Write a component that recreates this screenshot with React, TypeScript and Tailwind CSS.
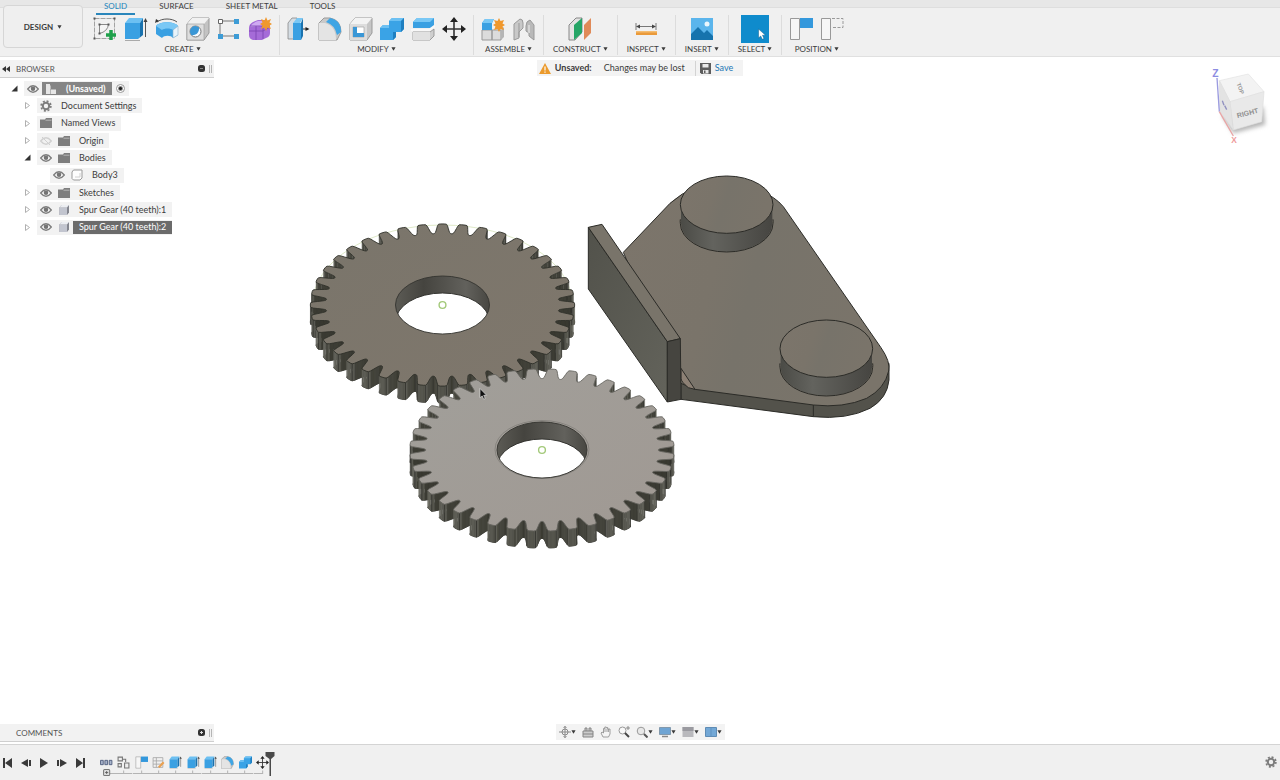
import React, { useState } from 'react';
import clsx from 'clsx';

const Caret = () => (
  <svg viewBox="0 0 6 4" className="h-1 w-[5px] shrink-0" aria-hidden="true">
    <path d="M.5 0h5L3 4z" fill="#3c3c3c" />
  </svg>
);

/* ---------- ribbon icons, all on a 24x24 grid ---------- */

const SketchIcon = () => (
  <>
    <path d="M1.500 1.500h20v20h-20z" fill="none" stroke="#a3a3a3" strokeDasharray="5 1" />
    <path d="M6.500 16.500v-9h9q-1 7-9 9z" fill="#f4f4f4" stroke="#888" />
    <path d="M.5.5h2v2h-2zM20.500.5h2v2h-2zM.5 20.500h2v2h-2zM5.500 6.500h2v2h-2zM14.500 6.500h2v2h-2zM5.500 15.500h2v2h-2z" fill="#555" />
    <path d="M18 13v10M13 18h10" stroke="#1fa04b" strokeWidth="3.500" />
  </>
);
const ExtrudeIcon = () => (
  <>
    <path d="M1 6l4-5h14l-3 5z" fill="#6cc0f2" />
    <path d="M1 6h15v14l-2 2H1z" fill="#3aa0e2" />
    <path d="M16 6l3-5v17l-5 4 2-2z" fill="#1a72ae" />
    <path d="M1 23.500h15" stroke="#aaa" />
    <path d="M21.500 20V4" stroke="#555" />
    <path d="M19.500 5l2-4 2 4z" fill="#444" />
  </>
);
const RevolveIcon = () => (
  <>
    <path d="M1 9c4-5 18-5 22 0v9l-5 3c-2-3-9-3-11 0l-6-4z" fill="#3aa0e2" />
    <path d="M1 9c4-5 18-5 22 0l-5 4c-2-2-9-2-11 0z" fill="#7ac8f5" />
    <path d="M18 13l5-4v9l-5 3z" fill="#e8f3fa" stroke="#8bb3cc" strokeWidth=".6" />
    <path d="M2 5C7 1 17 1 22 5" fill="none" stroke="#555" />
    <path d="M0 6l1-4 3 2z" fill="#333" />
  </>
);
const HoleIcon = () => (
  <>
    <path d="M1 7l5-6h17v15l-5 7H1z" fill="#c3c3c3" stroke="#999" />
    <path d="M1 7l5-6h17l-5 6z" fill="#f1f1f1" />
    <path d="M1 7h17v16H1z" fill="#dedede" stroke="#999" strokeWidth=".6" />
    <circle cx="9.500" cy="14.500" r="5.500" fill="#f7fbff" stroke="#777" />
    <path d="M9.500 9a5.500 5.500 0 0 0-4 9.200c5 .5 8-3 7.500-7.900z" fill="#3a97d6" />
  </>
);
const PatternIcon = () => (
  <>
    <path d="M3 4v15h16M5 4h14" fill="none" stroke="#777" strokeWidth="1" />
    <path d="M1.500 2.500h4v4h-4z" fill="#fff" stroke="#666" />
    <path d="M17 2h5v5h-5zM1 17h5v5H1zM17 17h5v5h-5z" fill="#3d9cd6" />
  </>
);
const FormIcon = () => (
  <>
    <path d="M1 11q0-4 4-6l5-2h8q4 2 4 6v7q0 4-4 5l-4 2H5q-4-1-4-5z" fill="#a56bd8" />
    <path d="M2 10q2-4 8-6h7l-3 5z" fill="#cfaaf2" />
    <path d="M1 14h14l7-4M8 9v14M15 9v13M2 9h13l6-4" fill="none" stroke="#7a43b0" strokeWidth=".8" />
    <path d="M18 0l1.500 3.500L23 2l-1.500 3.500L24 7l-2.500 1.500L23 12l-3.500-1.500L18 14l-1.500-3.500L13 12l1.500-3.500L12 7l2.500-1.500L13 2l3.500 1.500z" fill="#f0982d" />
  </>
);
const PressPullIcon = () => (
  <>
    <path d="M1 6l4-5h5v21H1z" fill="#d5dde3" stroke="#888" strokeWidth=".8" />
    <path d="M6 6l4-5h6l-3 5z" fill="#7ac8f5" />
    <path d="M6 6h8v17H6z" fill="#3aa0e2" />
    <path d="M14 6l2-5v18l-2 4z" fill="#1a72ae" />
    <path d="M16 12h5" stroke="#333" />
    <path d="M18.500 10l4 2-4 2z" fill="#222" />
  </>
);
const FilletIcon = () => (
  <>
    <path d="M1 6l5-5h6q11 2 11 14l-4 8H1z" fill="#c9c9c9" stroke="#999" />
    <path d="M1 6h6q11 3 11 17H1z" fill="#e4e4e4" />
    <path d="M8 5l4-4q11 2 11 14l-4 3Q17 8 8 5z" fill="#3fa5e4" />
  </>
);
const ShellIcon = () => (
  <>
    <path d="M1 7l5-6h17v15l-5 7H1z" fill="#c6c6c6" stroke="#999" />
    <path d="M1 7l5-6h17l-5 6z" fill="#f3f3f3" />
    <path d="M1 7h17v16H1z" fill="#ddd" />
    <path d="M4 10h11v10H4z" fill="#fff" stroke="#999" strokeWidth=".6" />
    <path d="M4 10h4v6h7v4H4z" fill="#3a97d6" />
  </>
);
const CombineIcon = () => (
  <>
    <path d="M0 11l3-3h6V4l3-3h12v11l-3 3h-5v5l-3 3H0z" fill="#3aa3e6" />
    <path d="M0 11l3-3h6V4l3-3h12l-3 3H9v7z" fill="#6cc0f2" />
    <path d="M21 4l3-3v11l-3 3zM13 15h3v5l-3 3z" fill="#1f7fc0" />
  </>
);
const SplitIcon = () => (
  <>
    <path d="M2 5l4-4h17v7l-4 3H2z" fill="#3aa0e2" />
    <path d="M2 5l4-4h17l-4 4z" fill="#7ac8f5" />
    <path d="M0 13h18l6-4" fill="none" stroke="#f8f8f8" strokeWidth="2" />
    <path d="M2 15h17l4-3v7l-4 4H2z" fill="#cfcfcf" stroke="#8a8a8a" strokeWidth=".8" />
    <path d="M2 15h17v8H2z" fill="#e1e1e1" />
  </>
);
const MoveIcon = () => (
  <>
    <path d="M12 4v16M4 12h16" stroke="#333" strokeWidth="1.600" />
    <path d="M12 0l4 5H8zM12 24l4-5H8zM0 12l5-4v8zM24 12l-5-4v8z" fill="#222" />
  </>
);
const ComponentIcon = () => (
  <>
    <path d="M1 13h10v10H1zM11 13h9v10h-9z" fill="#dcdcdc" stroke="#999" />
    <path d="M20 13l3-3v10l-3 3z" fill="#b5b5b5" />
    <path d="M1 6l3-4h9l-2 4v7H1z" fill="#3aa0e2" />
    <path d="M1 6l3-4h9l-2 4z" fill="#7ac8f5" />
    <path d="M18 1l1.500 3L23 3l-1.500 3.500L24 8l-2.500 1.500L23 13l-3.500-1-1.500 3-1.500-3-3.500 1 1.500-3.500L12 8l2.500-1.500L13 3l3.500 1z" fill="#f0982d" />
  </>
);
const JointIcon = () => (
  <>
    <path d="M2 7l6-5q3 0 3 4v5l-4 4v6l-5 2z" fill="#c8c8c8" stroke="#999" />
    <path d="M7 6v14" stroke="#999" />
    <path d="M22 8l-4-5q-4 1-4 6v5l3 2v3l5 4z" fill="#b9b9b9" stroke="#999" />
    <path d="M17 8v8" stroke="#f0f0f0" />
  </>
);
const PlaneIcon = () => (
  <>
    <path d="M1 8l7-7h6v14l-7 8H1z" fill="#e3e3e3" stroke="#888" />
    <path d="M6 8l8-7v15l-8 7z" fill="#25a566" />
    <path d="M16 8l7-7v15l-7 7z" fill="#e08a58" />
  </>
);
const MeasureIcon = () => (
  <>
    <path d="M2 6v7M22 6v7M3 9.500h18" stroke="#777" />
    <path d="M2 9.500l4-2v4zM22 9.500l-4-2v4z" fill="#444" />
    <path d="M2 14h21v4H2z" fill="#ea9a3a" />
    <path d="M2 14h21v1.500H2z" fill="#f5bc70" />
  </>
);
const ImageIcon = () => (
  <>
    <path d="M1 1h22v22H1z" fill="#5bb5ec" />
    <circle cx="17" cy="7" r="2.500" fill="#eaf6fd" />
    <path d="M1 17l7-7 6 6 3-3 6 6v4H1z" fill="#1673ad" />
  </>
);
const CapturePositionIcon = () => (
  <>
    <path d="M1.500 1.500h9v21h-9z" fill="#f6f6f6" stroke="#999" />
    <path d="M11 1h13v10H11z" fill="#3498dc" />
  </>
);
const RevertPositionIcon = () => (
  <>
    <path d="M1.500 1.500h9v21h-9z" fill="#f6f6f6" stroke="#999" />
    <path d="M12 1.500h11v9H12" fill="none" stroke="#999" strokeDasharray="3 1.500" />
  </>
);

type Tool = { name: string; Icon: React.FC };
type Group = { label: string; tools: Tool[]; compact?: boolean };

const groups: Group[] = [
  {
    label: 'CREATE',
    tools: [
      { name: 'Create Sketch', Icon: SketchIcon },
      { name: 'Extrude', Icon: ExtrudeIcon },
      { name: 'Revolve', Icon: RevolveIcon },
      { name: 'Hole', Icon: HoleIcon },
      { name: 'Pattern', Icon: PatternIcon },
      { name: 'Create Form', Icon: FormIcon },
    ],
  },
  {
    label: 'MODIFY',
    tools: [
      { name: 'Press Pull', Icon: PressPullIcon },
      { name: 'Fillet', Icon: FilletIcon },
      { name: 'Shell', Icon: ShellIcon },
      { name: 'Combine', Icon: CombineIcon },
      { name: 'Split Body', Icon: SplitIcon },
      { name: 'Move', Icon: MoveIcon },
    ],
  },
  {
    label: 'ASSEMBLE',
    tools: [
      { name: 'New Component', Icon: ComponentIcon },
      { name: 'Joint', Icon: JointIcon },
    ],
  },
  { label: 'CONSTRUCT', compact: true, tools: [{ name: 'Offset Plane', Icon: PlaneIcon }] },
  { label: 'INSPECT', compact: true, tools: [{ name: 'Measure', Icon: MeasureIcon }] },
  { label: 'INSERT', compact: true, tools: [{ name: 'Canvas', Icon: ImageIcon }] },
  { label: 'SELECT', compact: true, tools: [] },
  {
    label: 'POSITION',
    tools: [
      { name: 'Capture Position', Icon: CapturePositionIcon },
      { name: 'Revert Position', Icon: RevertPositionIcon },
    ],
  },
];

const tabs = ['SOLID', 'SURFACE', 'SHEET METAL', 'TOOLS'];

const Header = () => {
  const [activeTab, setActiveTab] = useState('SOLID');

  return (
    <header className="flex h-[57px] shrink-0 border-b border-[#e0e0e0] bg-[linear-gradient(#e7e7e7_0_7px,#dedede_7px_8px,#f0f0f0_8px)] text-[8px]">
      <button className="mt-[5px] ml-[3px] flex h-[43px] w-20 items-center justify-center gap-1 rounded-sm border border-[#d6d6d6] bg-[#efefef] font-bold">
        DESIGN <Caret />
      </button>
      <div className="ml-[3px] flex flex-col">
        <nav className="flex h-[15px] gap-4 pl-2.5">
          {tabs.map((tab) => (
            <button
              key={tab}
              onClick={() => setActiveTab(tab)}
              className={clsx(
                'h-[15px] border-b-2 px-2 leading-[13px]',
                activeTab === tab ? 'border-[#2a86bb] text-[#2484bb]' : 'border-transparent'
              )}
            >
              {tab}
            </button>
          ))}
        </nav>
        <div className="flex">
          {groups.map((group) => (
            <section
              key={group.label}
              className={clsx(
                'flex flex-col items-center border-r border-[#dcdcdc] last:border-r-0',
                group.compact ? 'px-[9px]' : 'px-[7px]'
              )}
            >
              <div className="flex h-7 items-center gap-[7px]">
                {group.tools.map(({ name, Icon }) => (
                  <button key={name} aria-label={name}>
                    <svg viewBox="0 0 24 24" className="size-6">
                      <Icon />
                    </svg>
                  </button>
                ))}
                {group.label === 'SELECT' && (
                  <button aria-label="Select" className="bg-[#0f8bcc]">
                    <svg viewBox="0 0 28 28" className="size-7">
                      <path d="M17.500 14v9l2.200-2 1.500 3.300 1.800-.8-1.500-3.300h3z" fill="#fff" stroke="#0a5f8e" strokeWidth=".5" />
                    </svg>
                  </button>
                )}
              </div>
              <button className="flex h-3 items-center gap-0.5 leading-3">
                {group.label} <Caret />
              </button>
            </section>
          ))}
        </div>
      </div>
    </header>
  );
};

/* ---------- browser tree ---------- */

const Eye = ({ off = false }) => (
  <svg viewBox="0 0 12 10" className="h-2.5 w-3">
    <path d="M.7 5Q6-1.500 11.300 5 6 11.500.7 5z" fill={off ? '#f1f1f1' : '#fff'} stroke={off ? '#d0d0d0' : '#7c7c7c'} strokeWidth="1.300" />
    {off ? <path d="M2 1l8 8" stroke="#d0d0d0" /> : <circle cx="6" cy="4.800" r="2.300" fill="#747474" />}
  </svg>
);
const Cog = () => (
  <svg viewBox="0 0 12 12" className="size-3">
    <circle cx="6" cy="6" r="3.200" fill="none" stroke="#7c7c7c" strokeWidth="2" />
    <circle cx="6" cy="6" r="4.900" fill="none" stroke="#7c7c7c" strokeWidth="1.600" strokeDasharray="2 1.848" />
  </svg>
);
const Folder = () => (
  <svg viewBox="0 0 12 10" className="h-2.5 w-3">
    <path d="M0 1.500h5L6 0h6v10H0z" fill="#7e7e7e" />
    <path d="M5.500 2.200h6" stroke="#c4c4c4" strokeWidth=".8" />
  </svg>
);
const Body = () => (
  <svg viewBox="0 0 12 12" className="size-3">
    <path d="M1 3l1.500-2H11v8l-2 2H2.500L1 9.500z" fill="#fdfdfd" stroke="#999" />
    <path d="M4 8h5V4" fill="none" stroke="#d0d0d0" />
  </svg>
);
const Part = () => (
  <svg viewBox="0 0 12 12" className="size-3">
    <path d="M1.500 3.500l2-2.500h7.500v7.500L9 11H1.500z" fill="#84868f" />
    <path d="M1.500 3.500H9V11H1.500z" fill="#c2c5cf" />
    <path d="M1.500 3.500l2-2.500H11L9 3.500z" fill="#eceef2" />
  </svg>
);
const Assembly = () => (
  <svg viewBox="0 0 12 12" className="size-3">
    <path d="M1 1h4v10H1zM5.500 6.500H11V11H5.500z" fill="#e6e6e6" />
    <path d="M5 3l1-1v4.500H5z" fill="#bbb" />
  </svg>
);

const icons = { cog: Cog, folder: Folder, body: Body, part: Part, assembly: Assembly };

interface TreeNode {
  label: string;
  depth: 0 | 1 | 2;
  icon: keyof typeof icons;
  arrow?: 'open' | 'closed';
  eye?: 'on' | 'off';
}

const tree: TreeNode[] = [
  { label: '(Unsaved)', depth: 0, icon: 'assembly', arrow: 'open', eye: 'on' },
  { label: 'Document Settings', depth: 1, icon: 'cog', arrow: 'closed' },
  { label: 'Named Views', depth: 1, icon: 'folder', arrow: 'closed' },
  { label: 'Origin', depth: 1, icon: 'folder', arrow: 'closed', eye: 'off' },
  { label: 'Bodies', depth: 1, icon: 'folder', arrow: 'open', eye: 'on' },
  { label: 'Body3', depth: 2, icon: 'body', eye: 'on' },
  { label: 'Sketches', depth: 1, icon: 'folder', arrow: 'closed', eye: 'on' },
  { label: 'Spur Gear (40 teeth):1', depth: 1, icon: 'part', arrow: 'closed', eye: 'on' },
  { label: 'Spur Gear (40 teeth):2', depth: 1, icon: 'part', arrow: 'closed', eye: 'on' },
];

const indent = ['pl-2', 'pl-[21px]', 'pl-[34px]'];

const PanelTitle = ({ title, plus = false }: { title: string; plus?: boolean }) => (
  <div className="flex h-[18px] items-center border-b border-[#cfcfcf] bg-[#f2f2f2] text-[8px] text-[#555]">
    <svg viewBox="0 0 8 6" className={clsx('ml-0.5 h-1.5 w-2', plus && 'invisible')}>
      <path d="M4 0v6L0 3zM8 0v6L4 3z" fill="#333" />
    </svg>
    <h2 className="ml-1.5 flex-1">{title}</h2>
    <button aria-label={plus ? 'Add comment' : 'Collapse'}>
      <svg viewBox="0 0 7 7" className="size-[7px]">
        <rect width="7" height="7" rx="2.500" fill="#333" />
        <path d={plus ? 'M2 3.500h3M3.500 2v3' : 'M2 3.500h3'} stroke={plus ? '#ddd' : '#888'} />
      </svg>
    </button>
    <span className="mr-0.5 ml-1 h-2 w-[3px] border-x border-[#b5b5b5]" />
  </div>
);

const Browser = () => {
  const [selected, setSelected] = useState('Spur Gear (40 teeth):2');

  return (
    <aside className="w-[214px]">
      <PanelTitle title="BROWSER" />
      <ul className="mt-0.5 grid h-[156px] auto-rows-fr">
        {tree.map((node) => {
          const Icon = icons[node.icon];
          const root = node.depth === 0;
          return (
            <li key={node.label} className={clsx('flex items-center', indent[node.depth])}>
              <span className="flex w-4 justify-center pr-1">
                {node.arrow && (
                  <svg viewBox="0 0 7 7" className="size-[7px]">
                    {node.arrow === 'open' ? (
                      <path d="M6.500.5v6h-6z" fill="#333" />
                    ) : (
                      <path d="M1.500.500l4 3-4 3z" fill="#fff" stroke="#b0b0b0" />
                    )}
                  </svg>
                )}
              </span>
              <div className="flex h-[15px] items-center bg-[#f2f2f2]">
                {node.eye && (
                  <button aria-label={`Toggle ${node.label}`} className="flex w-[18px] justify-center">
                    <Eye off={node.eye === 'off'} />
                  </button>
                )}
                <button
                  onClick={() => setSelected(node.label)}
                  className={clsx('flex h-[13px] items-center', root && 'bg-[#858585] font-bold text-white')}
                >
                  <span className="flex w-[18px] justify-center">
                    <Icon />
                  </span>
                  <span
                    className={clsx(
                      'flex h-[13px] items-center px-1.5 whitespace-nowrap',
                      selected === node.label && 'bg-[#6b6b6b] text-white'
                    )}
                  >
                    {node.label}
                  </span>
                </button>
                {root && (
                  <input
                    type="radio"
                    aria-label="Activate component"
                    defaultChecked
                    className="mx-1 size-[9px] appearance-none rounded-full border border-[#999] bg-[radial-gradient(#222_1px,#fff_3px)]"
                  />
                )}
              </div>
            </li>
          );
        })}
      </ul>
    </aside>
  );
};

/* ---------- model ---------- */

// half a tooth: [degrees from tooth centre, radius as a share of the outer radius]
const profile = [
  [4.3, 0.882], [3.9, 0.885], [3.5, 0.895], [3.1, 0.915], [2.6, 0.95], [2.2, 0.98], [1.7, 0.998], [0.8, 1.001],
];

const TEETH = 40;
const RX = 132;
const RY = 81;
const DEPTH = 17;

const gearPoints = (cx: number, cy: number, phase: number) => {
  const pts: [number, number][] = [];
  for (let i = 0; i < TEETH; i++) {
    const centre = (i * 360) / TEETH + phase - 90;
    const left = profile.map(([a, r]) => [centre - a, r]);
    const right = [...profile].reverse().map(([a, r]) => [centre + a, r]);
    [...left, ...right].forEach(([a, r]) => {
      const rad = (a * Math.PI) / 180;
      pts.push([cx + Math.cos(rad) * r * RX, cy + Math.sin(rad) * r * RY]);
    });
  }
  return pts;
};

interface GearProps {
  id: string;
  cx: number;
  cy: number;
  phase: number;
  face: [string, string];
  edge: string;
  inset?: boolean;
}

const Gear: React.FC<GearProps> = ({ id, cx, cy, phase, face, edge, inset }) => {
  const pts = gearPoints(cx, cy, phase);
  const outline = pts.map(([x, y]) => `${x.toFixed(2)} ${y.toFixed(2)}`).join('L');
  const hx = inset ? 45 : 47;
  const hy = inset ? 28 : 29;
  const hole = `M${cx - hx} ${cy}a${hx} ${hy} 0 1 0 ${hx * 2} 0a${hx} ${hy} 0 1 0 ${-hx * 2} 0z`;

  // only the walls that face the viewer, far ones first
  const walls = pts
    .map((p, i) => {
      const q = pts[(i + 1) % pts.length];
      const dx = q[0] - p[0];
      const dy = q[1] - p[1];
      const len = Math.hypot(dx, dy) || 1;
      return { p, q, i, nx: dy / len, ny: -dx / len, y: (p[1] + q[1]) / 2 };
    })
    .filter((w) => w.ny > 0)
    .sort((a, b) => a.y - b.y);

  return (
    <g>
      <defs>
        <linearGradient id={`${id}-face`} x1="0" y1="0" x2="1" y2="1">
          <stop offset="0" stopColor={face[0]} />
          <stop offset="1" stopColor={face[1]} />
        </linearGradient>
        <linearGradient id={`${id}-bore`}>
          <stop offset="0" stopColor="#5c5b55" />
          <stop offset=".3" stopColor="#45443f" />
          <stop offset=".75" stopColor="#62615c" />
          <stop offset="1" stopColor="#484742" />
        </linearGradient>
        <clipPath id={`${id}-clip`}>
          <path d={hole} />
        </clipPath>
      </defs>
      <path d={`M${outline}z`} transform={`translate(0 ${DEPTH})`} fill="#3d3c37" stroke="#2b2b27" strokeWidth=".8" />
      {[...walls].map(({ p, q, nx, i }) => {
        // tooth tips catch the light, flanks stay dark
        const tip = i % 16 > 4 && i % 16 < 10;
        const shade = Math.round((tip ? 84 : 56) + 22 * Math.abs(nx));
        const fill = `rgb(${shade},${shade},${shade - 8})`;
        return (
          <path
            key={i}
            d={`M${p[0]} ${p[1]}L${q[0]} ${q[1]}v${DEPTH}L${p[0]} ${p[1] + DEPTH}z`}
            fill={fill}
            stroke={fill}
            strokeWidth=".4"
          />
        );
      })}
      {walls
        .filter(({ i }) => i % 16 === 6 || i % 16 === 10)
        .map(({ p, i }) => (
          <path key={i} d={`M${p[0]} ${p[1]}v${DEPTH}`} stroke="#2c2c28" strokeWidth=".7" />
        ))}
      <path d={`M${outline}z`} fill={`url(#${id}-face)`} stroke={edge} strokeWidth=".9" strokeLinejoin="round" />
      {inset && (
        <ellipse cx={cx} cy={cy - 0.5} rx="47" ry="29" fill="none" stroke="#807d78" strokeWidth=".8" />
      )}
      <path d={hole} fill={`url(#${id}-bore)`} />
      <g clipPath={`url(#${id}-clip)`}>
        <path d={hole} transform={`translate(0 ${DEPTH})`} fill="#fff" stroke="#33332f" />
      </g>
      <path d={hole} fill="none" stroke="#33332f" strokeWidth=".9" />
      <circle cx={cx} cy={cy} r="3.400" fill="#fff" stroke="#a3c97a" strokeWidth="1.400" />
    </g>
  );
};

const Boss = ({ cx, cy }: { cx: number; cy: number }) => (
  <g stroke="#2b2b27" strokeWidth="3">
    <path d={`M${cx - 137} ${cy}v56a137 85 0 0 0 274 0v-56z`} fill="url(#boss)" stroke="none" />
    <path d={`M${cx - 139} ${cy + 44}q-1 6 0 12a139 86 0 0 0 278 0q1-6 0-12`} fill="none" />
    <ellipse cx={cx} cy={cy} rx="139" ry="86" fill="url(#plate)" />
  </g>
);

// drawn at three times the size of the scene, then scaled down
const Bracket = () => (
  <g transform="translate(580 165) scale(.33333)" stroke="#2b2b27" strokeWidth="3" strokeLinejoin="round">
    <defs>
      <linearGradient id="plate" x1="0" y1="0" x2="1" y2=".2">
        <stop offset="0" stopColor="#7c756b" />
        <stop offset=".4" stopColor="#7a746a" />
        <stop offset=".55" stopColor="#77736a" />
        <stop offset="1" stopColor="#7a746a" />
      </linearGradient>
      <linearGradient id="boss">
        <stop offset="0" stopColor="#4b4b46" />
        <stop offset=".35" stopColor="#63635e" />
        <stop offset="1" stopColor="#464541" />
      </linearGradient>
      <linearGradient id="flange" x1="0" y1="0" x2="1" y2="1">
        <stop offset="0" stopColor="#52524b" />
        <stop offset="1" stopColor="#63635b" />
      </linearGradient>
    </defs>
    <path d="M303 655L800 600 927 595V645Q922 700 870 730 800 765 700 755L303 703z" fill="#53524b" />
    <path d="M130 262L270 115Q340 50 440 60 560 65 610 125L903 548Q932 590 926 618 915 670 860 700 790 730 700 720L345 673 303 655z" fill="url(#plate)" />
    <path d="M700 720V755" />
    <path d="M303 610L345 673 325 668Q303 650 303 640z" fill="#8d8175" />
    <Boss cx={440} cy={119} />
    <Boss cx={739} cy={551} />
    <path d="M25 187L262 530V711L25 372z" fill="url(#flange)" />
    <path d="M25 187L66 178 301 521 262 530z" fill="#79746a" />
    <path d="M262 530L301 521 303 703 262 711z" fill="#464540" />
  </g>
);

const Scene = () => (
  <svg viewBox="0 57 1280 687" className="absolute inset-0 size-full" role="img" aria-label="Two spur gears and a bracket">
    <ellipse cx="442.500" cy="305" rx="130" ry="80" fill="none" stroke="#d5e3ba" strokeWidth=".8" />
    <Gear id="gear-1" cx={442.5} cy={305} phase={0} face={['#7a756b', '#7f776c']} edge="#2f3029" />
    <Gear id="gear-2" cx={542} cy={450} phase={4.5} face={['#a19f9a', '#a09993']} edge="#65645f" inset />
    <Bracket />
    <path d="M480 388.500v9.200l2.200-1.800 1.500 3.300 1.500-.7-1.500-3.200h2.900z" fill="#111" stroke="#eee" strokeWidth=".6" />
  </svg>
);

const ViewCube = () => (
  <svg viewBox="0 0 270 270" className="size-[90px]" role="img" aria-label="View cube">
    <defs>
      <filter id="soft" x="-30%" y="-30%" width="160%" height="160%">
        <feGaussianBlur stdDeviation="7" />
      </filter>
    </defs>
    <path d="M95 165L130 220 226 194 220 140z" fill="#b5b5b5" filter="url(#soft)" />
    <path d="M88 62L175 42 222 95 120 125z" fill="#f3f3f3" stroke="#e2e2e2" strokeWidth="2" />
    <path d="M120 125L222 95 215 185 130 210z" fill="#e9e9e9" stroke="#e0e0e0" strokeWidth="2" />
    <path d="M88 62L120 125 130 210 90 155z" fill="#e3e3e3" stroke="#dcdcdc" strokeWidth="2" />
    <path d="M81 54L88 155" stroke="#9b9be0" strokeWidth="4" />
    <path d="M88 155L130 228" stroke="#e8a5a5" strokeWidth="4" />
    <path d="M97 122l5 14M104 137l6 12" stroke="#9191c0" strokeWidth="4" />
    <g fontFamily="Liberation Sans" fontWeight="700" textAnchor="middle">
      <text x="76" y="50" fontSize="31" fill="#8c8ce2">Z</text>
      <text x="132" y="248" fontSize="25" fill="#ee9a9a">X</text>
      <text x="173" y="166" fontSize="21" fill="#909090" transform="rotate(-14 173 160)">RIGHT</text>
      <text x="152" y="92" fontSize="17" fill="#999" transform="rotate(70 152 85)">TOP</text>
    </g>
  </svg>
);

/* ---------- bottom bars ---------- */

const navTools = [
  { name: 'Orbit', caret: true, art: <path d="M6 0v12M0 6h12M3 6a3 3 0 1 0 6 0 3 3 0 1 0-6 0M4.500 2L6 .5 7.500 2M4.500 10L6 11.500 7.500 10" fill="none" stroke="#8a8a8a" /> },
  { name: 'Look At', art: <path d="M1 5h10v6H1zM3 5V2h2v3M7 5V2h2v3M1 8h10" fill="#ccc" stroke="#858585" /> },
  { name: 'Pan', art: <path d="M3 11L1 7l1-1 1.500 1V2.500h1.300V1h1.400v.500h1.500V3H10v5l-1.500 3zM5 2.500V6M7 2.500V6M8.600 3v3" fill="#f5f5f5" stroke="#888" strokeWidth=".8" /> },
  { name: 'Zoom', art: <><circle cx="4.500" cy="4.500" r="3.500" fill="#f8f8f8" stroke="#999" /><path d="M7 7l4 4" stroke="#444" strokeWidth="2" /><path d="M8 2h4M10 0v4" stroke="#777" strokeWidth=".8" /></> },
  { name: 'Fit', caret: true, art: <><circle cx="5" cy="5" r="3.800" fill="#e8e8e8" stroke="#999" /><path d="M8 8l3.500 3.500" stroke="#555" strokeWidth="2" /></> },
  { name: 'Display Settings', caret: true, art: <><path d="M.5 1.500h11v7H.5z" fill="#6fa4d3" stroke="#8299ad" /><path d="M3 10.500h6" stroke="#888" strokeWidth="1.500" /></> },
  { name: 'Grid and Snaps', caret: true, art: <><path d="M.5 1h11v10H.5z" fill="#b9b9bd" /><path d="M.5 1h11v4H.5z" fill="#9a9aa0" /></> },
  { name: 'Viewports', caret: true, art: <><path d="M.5 1.500h11v9H.5z" fill="#73a8d6" stroke="#5f8cb5" /><path d="M6 2v8" stroke="#5c8dbb" strokeWidth=".8" /></> },
];

const NavBar = () => (
  <div className="flex h-4 items-center gap-1.5 bg-[#f3f3f3] px-[3px]">
    {navTools.map(({ name, caret, art }) => (
      <button key={name} aria-label={name} className="flex items-center">
        <svg viewBox="0 0 12 12" className="size-3">{art}</svg>
        {caret && <Caret />}
      </button>
    ))}
  </div>
);

const playback = [
  { name: 'Go to start', d: 'M0 0h2v10H0zM9 0v10L2 5z' },
  { name: 'Step back', d: 'M7 1v8L0 5zM8 2h2v6H8z' },
  { name: 'Play', d: 'M1 0v10l8-5z' },
  { name: 'Step forward', d: 'M3 1v8l7-4zM0 2h2v6H0z' },
  { name: 'Go to end', d: 'M1 0v10l7-5zM8 0h2v10H8z' },
];

const features: Tool[] = [
  { name: 'Group', Icon: () => <path d="M1 8h5v8H1zM9 8h5v8H9zM17 8h5v8h-5z" fill="#a8b4cc" stroke="#4a5878" strokeWidth="1.600" /> },
  { name: 'Component', Icon: () => <path d="M2 2h8v7H2zM14 13h8v9h-8zM2 14h6v6H2zM10 6h6v5" fill="#eee" stroke="#777" strokeWidth="2" /> },
  { name: 'Position', Icon: CapturePositionIcon },
  { name: 'Sketch', Icon: () => <><path d="M2 3h18v18H2zM2 9h18M2 15h18M8 3v18" fill="none" stroke="#a5a5a5" strokeWidth="1.500" /><path d="M11 20l9-10 3 3-9 9z" fill="#eaa050" /></> },
  { name: 'Extrude 1', Icon: ExtrudeIcon },
  { name: 'Extrude 2', Icon: ExtrudeIcon },
  { name: 'Extrude 3', Icon: ExtrudeIcon },
  { name: 'Fillet', Icon: FilletIcon },
  { name: 'Combine', Icon: CombineIcon },
  { name: 'Move', Icon: MoveIcon },
];

const Timeline = () => (
  <footer className="flex h-9 shrink-0 items-start border-t border-[#d4d4d4] bg-[#f0f0f0] px-[3px] pt-[11px]">
    <div className="flex gap-2 pt-0.5">
      {playback.map((b) => (
        <button key={b.name} aria-label={b.name}>
          <svg viewBox="0 0 10 10" className="size-2.5">
            <path d={b.d} fill="#3a3a3a" />
          </svg>
        </button>
      ))}
    </div>
    <div className="ml-[13px] flex">
      <div className="grid w-[173px] grid-cols-10">
        {features.map(({ name, Icon }, i) => (
          <div key={name} className="flex flex-col items-center">
            <button aria-label={name}>
              <svg viewBox="0 0 24 24" className="size-[13px]">
                <Icon />
              </svg>
            </button>
            {i === 0 ? (
              <svg viewBox="0 0 17 7" preserveAspectRatio="none" className="h-[7px] w-full">
                <path d="M9 4.500h8" stroke="#b4b4b4" />
                <rect x="5.500" y=".5" width="6" height="6" rx="1" fill="#ddd" stroke="#777" />
                <path d="M7 3.500h3M8.500 2v3" stroke="#555" strokeWidth=".8" />
              </svg>
            ) : (
              <svg viewBox="0 0 17 7" preserveAspectRatio="none" className="h-[7px] w-full">
                <path d={i === features.length - 1 ? 'M0 4.500h8.500v-3' : 'M0 4.500h17M8.500 4.500v-3'} fill="none" stroke="#b4b4b4" />
              </svg>
            )}
          </div>
        ))}
      </div>
      <svg viewBox="0 0 10 24" className="-mt-1 -ml-1.5 h-6 w-2.5">
        <path d="M.5 0h9v4L6 7v17H4.500V7L.5 4z" fill="#4a4a4a" />
      </svg>
    </div>
    <button aria-label="Timeline settings" className="ml-auto">
      <Cog />
    </button>
  </footer>
);

export default function App() {
  return (
    <div className="flex h-screen flex-col overflow-hidden bg-white font-['Lato',sans-serif] text-[9px] leading-3 text-[#3c3c3c]">
      <Header />
      <main className="relative flex-1">
        <Scene />
        <div className="relative flex h-full flex-col justify-between pt-[3px] pb-0.5">
          <div className="grid grid-cols-[1fr_auto_1fr] items-start">
            <Browser />
            <div className="flex h-4 items-center bg-[#f3f3f3] pr-2.5 pl-0.5">
              <svg viewBox="0 0 12 11" className="h-[11px] w-3">
                <path d="M6 0l6 11H0z" fill="#eb9a2c" />
                <path d="M6 3.500v4M6 8.500v1.300" stroke="#fff" strokeWidth="1.200" />
              </svg>
              <strong className="ml-1">Unsaved:</strong>
              <span className="ml-3">Changes may be lost</span>
              <button className="ml-2.5 flex h-[15px] items-center gap-1 border-l border-[#d3d3d3] pl-1 text-[#2277b5]">
                <svg viewBox="0 0 11 11" className="size-[11px]">
                  <path d="M0 0h11v11H1.500L0 9.500z" fill="#5c5c5c" />
                  <path d="M2.500 1h6v3.500h-6zM3 7h5.500v3.500H3z" fill="#e8e8e8" />
                  <path d="M4 7.500h1.500v2.500H4z" fill="#5c5c5c" />
                </svg>
                Save
              </button>
            </div>
            <div className="flex justify-end">
              <ViewCube />
            </div>
          </div>
          <div className="grid grid-cols-[1fr_auto_1fr] items-start">
            <div className="w-[214px]">
              <PanelTitle title="COMMENTS" plus />
            </div>
            <NavBar />
          </div>
        </div>
      </main>
      <Timeline />
    </div>
  );
}
